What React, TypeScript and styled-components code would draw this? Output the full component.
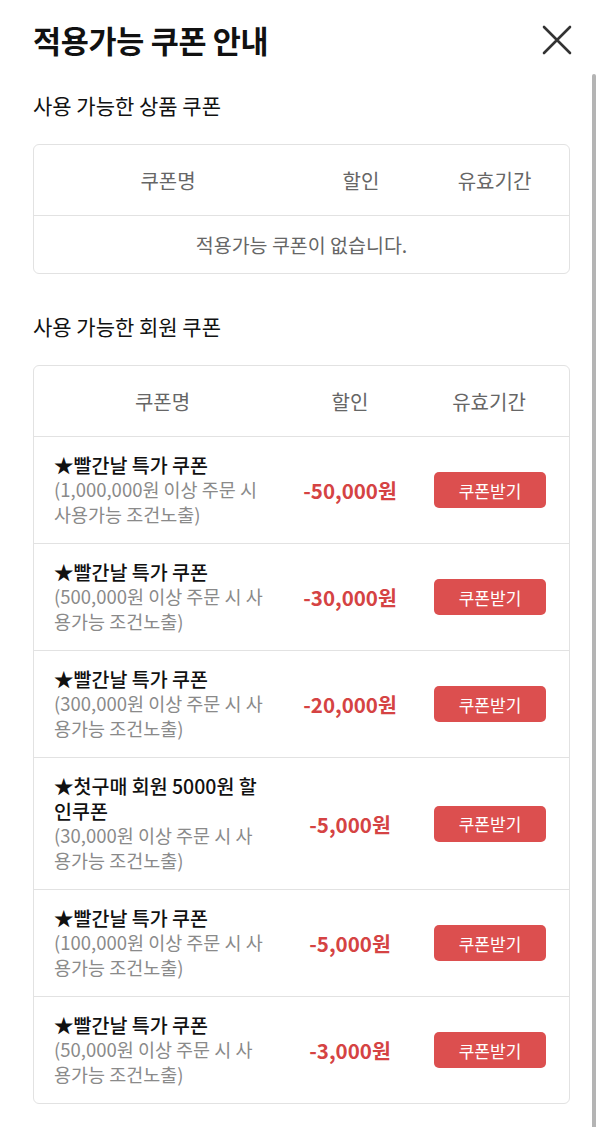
import React from "react";
import styled, { createGlobalStyle } from "styled-components";

const GlobalStyle = createGlobalStyle`
  html, body { margin: 0; padding: 0; background: #fff; }
  body {
    font-family: "Noto Sans CJK KR", "Noto Sans", sans-serif;
    color: #111;
    -webkit-font-smoothing: antialiased;
  }
  * { box-sizing: border-box; }
`;

const Page = styled.div`
  position: relative;
  width: 600px;
  min-height: 1127px;
  padding: 0 30px 24px 33px;
`;

const Header = styled.header`
  height: 80px;
  display: flex;
  align-items: center;
  justify-content: space-between;
`;

const Title = styled.h1`
  margin: 0;
  font-size: 30.5px;
  font-weight: 700;
  letter-spacing: -0.3px;
  color: #111;
`;

const CloseButton = styled.button`
  width: 32px;
  height: 32px;
  margin-right: -3px;
  padding: 0;
  border: 0;
  background: none;
  display: flex;
  align-items: center;
  justify-content: center;
`;

const SectionLabel = styled.h2<{ $top: number }>`
  margin: ${(p) => p.$top}px 0 24px;
  height: 30px;
  line-height: 30px;
  font-size: 21px;
  font-weight: 400;
  color: #111;
`;

const Table = styled.div`
  border: 1px solid #e2e2e2;
  border-radius: 6px;
  overflow: hidden;
`;

const Row = styled.div<{ $cols: string; $height?: number }>`
  display: grid;
  grid-template-columns: ${(p) => p.$cols};
  align-items: center;
  min-height: ${(p) => p.$height ?? 0}px;
  & + & {
    border-top: 1px solid #e2e2e2;
  }
`;

const HeadCell = styled.div`
  text-align: center;
  font-size: 20px;
  color: #666;
`;

const EmptyCell = styled.div`
  grid-column: 1 / -1;
  text-align: center;
  font-size: 19.5px;
  color: #666;
`;

const NameCell = styled.div`
  padding: 15px 27px 16px 20px;
`;

const CouponName = styled.div`
  font-size: 19.5px;
  line-height: 25px;
  font-weight: 500;
  color: #111;
`;

const CouponCond = styled.div`
  font-size: 18.5px;
  line-height: 25px;
  color: #8a8a8a;
`;

const Discount = styled.div`
  text-align: center;
  font-size: 20.5px;
  font-weight: 700;
  color: #d54343;
`;

const ActionCell = styled.div`
  display: flex;
  justify-content: center;
  padding-left: 2px;
`;

const GetButton = styled.button`
  width: 112px;
  height: 36px;
  border: 0;
  border-radius: 5px;
  background: #dc4f4f;
  color: #fff;
  font-family: inherit;
  font-size: 17px;
  padding: 0;
`;

const Scrollbar = styled.div`
  position: absolute;
  right: 4px;
  top: 74px;
  bottom: 0;
  width: 4px;
  border-radius: 2px 2px 0 0;
  background: #b4b4b4;
`;

const coupons = [
  { name: "★빨간날 특가 쿠폰", cond: "(1,000,000원 이상 주문 시 사용가능 조건노출)", amt: "-50,000원" },
  { name: "★빨간날 특가 쿠폰", cond: "(500,000원 이상 주문 시 사용가능 조건노출)", amt: "-30,000원" },
  { name: "★빨간날 특가 쿠폰", cond: "(300,000원 이상 주문 시 사용가능 조건노출)", amt: "-20,000원" },
  { name: "★첫구매 회원 5000원 할인쿠폰", cond: "(30,000원 이상 주문 시 사용가능 조건노출)", amt: "-5,000원" },
  { name: "★빨간날 특가 쿠폰", cond: "(100,000원 이상 주문 시 사용가능 조건노출)", amt: "-5,000원" },
  { name: "★빨간날 특가 쿠폰", cond: "(50,000원 이상 주문 시 사용가능 조건노출)", amt: "-3,000원" },
];

const PRODUCT_COLS = "268px 118px 1fr";
const MEMBER_COLS = "257px 118px 1fr";

export default function App() {
  return (
    <>
      <GlobalStyle />
      <Page>
        <Header>
          <Title>적용가능 쿠폰 안내</Title>
          <CloseButton aria-label="닫기">
            <svg width="30" height="30" viewBox="0 0 30 30">
              <path d="M2 2 L28 28 M28 2 L2 28" stroke="#333" strokeWidth="2.6" strokeLinecap="round" />
            </svg>
          </CloseButton>
        </Header>

        <SectionLabel $top={10}>사용 가능한 상품 쿠폰</SectionLabel>
        <Table>
          <Row $cols={PRODUCT_COLS} $height={70}>
            <HeadCell>쿠폰명</HeadCell>
            <HeadCell>할인</HeadCell>
            <HeadCell>유효기간</HeadCell>
          </Row>
          <Row $cols={PRODUCT_COLS} $height={58}>
            <EmptyCell>적용가능 쿠폰이 없습니다.</EmptyCell>
          </Row>
        </Table>

        <SectionLabel $top={37}>사용 가능한 회원 쿠폰</SectionLabel>
        <Table>
          <Row $cols={MEMBER_COLS} $height={70}>
            <HeadCell>쿠폰명</HeadCell>
            <HeadCell>할인</HeadCell>
            <HeadCell>유효기간</HeadCell>
          </Row>
          {coupons.map((c, i) => (
            <Row key={i} $cols={MEMBER_COLS}>
              <NameCell>
                <CouponName>{c.name}</CouponName>
                <CouponCond>{c.cond}</CouponCond>
              </NameCell>
              <Discount>{c.amt}</Discount>
              <ActionCell>
                <GetButton>쿠폰받기</GetButton>
              </ActionCell>
            </Row>
          ))}
        </Table>
        <Scrollbar />
      </Page>
    </>
  );
}
